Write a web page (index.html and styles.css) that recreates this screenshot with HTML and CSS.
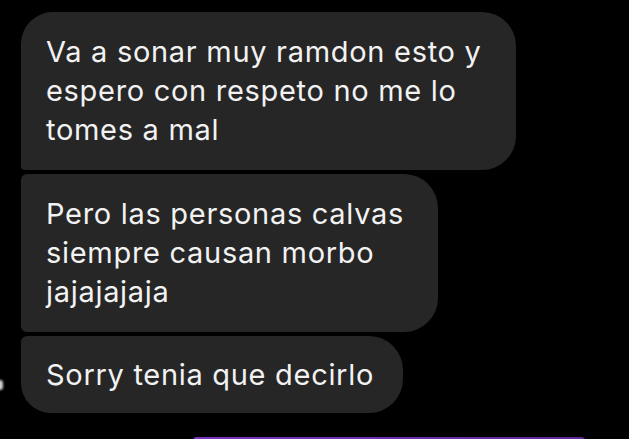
FILE: index.html
```html
<!DOCTYPE html>
<html lang="es">
<head>
<meta charset="utf-8">
<title>Chat</title>
<link rel="stylesheet" href="styles.css">
</head>
<body>
<div class="screen">
  <div class="thread">
    <div class="bubble first">Va a sonar muy ramdon esto y<br>espero con respeto no me lo<br>tomes a mal</div>
    <div class="bubble middle">Pero las personas calvas<br>siempre causan morbo<br>jajajajaja</div>
    <div class="bubble last">Sorry tenia que decirlo</div>
  </div>
  <div class="avatar-edge"></div>
  <div class="composer-edge"></div>
</div>
</body>
</html>
```
FILE: styles.css
```css
html, body {
  margin: 0;
  padding: 0;
  background: #000;
}
.screen {
  position: relative;
  width: 629px;
  height: 439px;
  overflow: hidden;
  background: #000;
  font-family: Inter, "Noto Sans", sans-serif;
}
.thread {
  display: flex;
  flex-direction: column;
  align-items: flex-start;
  gap: 4px;
  padding: 12px 0 0 21px;
}
.bubble {
  background: #262626;
  color: #f2f2f2;
  font-size: 29px;
  letter-spacing: 0.7px;
  line-height: 39px;
  padding: 20px 34px 21px 25px;
  white-space: nowrap;
}
.first {
  border-radius: 32px 34px 34px 4px;
}
.middle {
  border-radius: 6px 34px 34px 6px;
}
.last {
  padding: 19px 29px 19px 25px;
  border-radius: 6px 34px 34px 30px;
}
.avatar-edge {
  position: absolute;
  left: -3px;
  top: 380px;
  width: 6px;
  height: 10px;
  border-radius: 3px;
  background: #cfcfcf;
  filter: blur(1px);
}
.composer-edge {
  position: absolute;
  left: 193px;
  top: 437px;
  width: 392px;
  height: 8px;
  border-radius: 4px;
  background: linear-gradient(90deg, #7a34c0, #6d2fb0 50%, #5e2898);
  filter: blur(0.6px);
}
```
